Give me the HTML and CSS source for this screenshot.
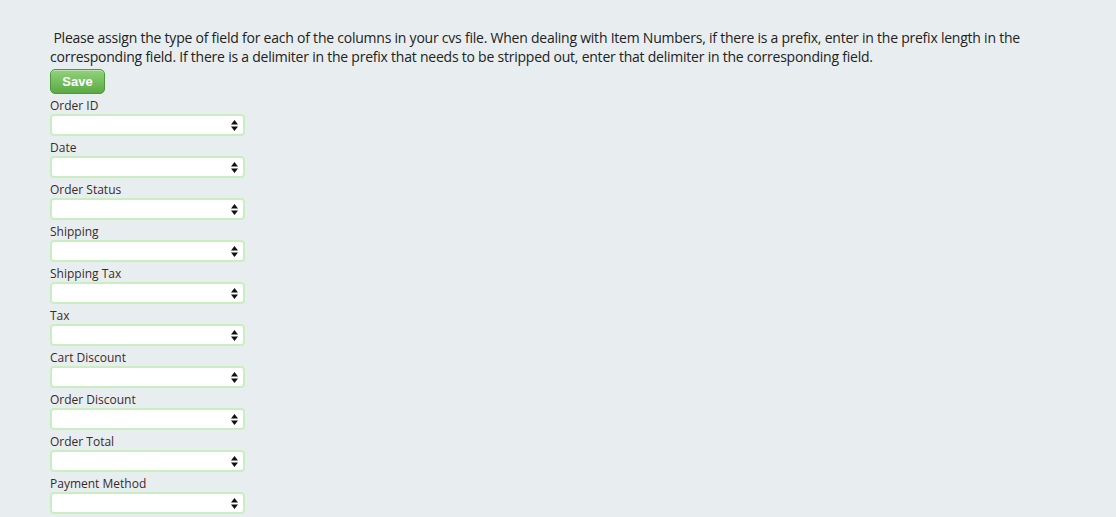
FILE: index.html
```html
<!DOCTYPE html>
<html>
<head>
<meta charset="utf-8">
<link rel="stylesheet" href="styles.css">
</head>
<body>
<div class="page">
  <p class="intro">&nbsp;Please assign the type of field for each of the columns in your cvs file. When dealing with Item Numbers, if there is a prefix, enter in the prefix length in the corresponding field. If there is a delimiter in the prefix that needs to be stripped out, enter that delimiter in the corresponding field.</p>
  <button class="save">Save</button>
  <div class="field"><label>Order ID</label><div class="select"><svg class="arrows" width="7" height="11" viewBox="0 0 7 11"><path d="M3.5 0L7 4.5H0Z M0 6.5H7L3.5 11Z" fill="#111"/></svg></div></div>
  <div class="field"><label>Date</label><div class="select"><svg class="arrows" width="7" height="11" viewBox="0 0 7 11"><path d="M3.5 0L7 4.5H0Z M0 6.5H7L3.5 11Z" fill="#111"/></svg></div></div>
  <div class="field"><label>Order Status</label><div class="select"><svg class="arrows" width="7" height="11" viewBox="0 0 7 11"><path d="M3.5 0L7 4.5H0Z M0 6.5H7L3.5 11Z" fill="#111"/></svg></div></div>
  <div class="field"><label>Shipping</label><div class="select"><svg class="arrows" width="7" height="11" viewBox="0 0 7 11"><path d="M3.5 0L7 4.5H0Z M0 6.5H7L3.5 11Z" fill="#111"/></svg></div></div>
  <div class="field"><label>Shipping Tax</label><div class="select"><svg class="arrows" width="7" height="11" viewBox="0 0 7 11"><path d="M3.5 0L7 4.5H0Z M0 6.5H7L3.5 11Z" fill="#111"/></svg></div></div>
  <div class="field"><label>Tax</label><div class="select"><svg class="arrows" width="7" height="11" viewBox="0 0 7 11"><path d="M3.5 0L7 4.5H0Z M0 6.5H7L3.5 11Z" fill="#111"/></svg></div></div>
  <div class="field"><label>Cart Discount</label><div class="select"><svg class="arrows" width="7" height="11" viewBox="0 0 7 11"><path d="M3.5 0L7 4.5H0Z M0 6.5H7L3.5 11Z" fill="#111"/></svg></div></div>
  <div class="field"><label>Order Discount</label><div class="select"><svg class="arrows" width="7" height="11" viewBox="0 0 7 11"><path d="M3.5 0L7 4.5H0Z M0 6.5H7L3.5 11Z" fill="#111"/></svg></div></div>
  <div class="field"><label>Order Total</label><div class="select"><svg class="arrows" width="7" height="11" viewBox="0 0 7 11"><path d="M3.5 0L7 4.5H0Z M0 6.5H7L3.5 11Z" fill="#111"/></svg></div></div>
  <div class="field"><label>Payment Method</label><div class="select"><svg class="arrows" width="7" height="11" viewBox="0 0 7 11"><path d="M3.5 0L7 4.5H0Z M0 6.5H7L3.5 11Z" fill="#111"/></svg></div></div>
</div>
</body>
</html>
```
FILE: styles.css
```css
html, body { margin: 0; padding: 0; }
body {
  background: #e8eef0;
  font-family: "Open Sans", "DejaVu Sans", sans-serif;
  color: #222;
  height: 517px;
  overflow: hidden;
}
.page {
  padding: 28px 0 0 50px;
  width: 1000px;
}
.intro {
  margin: 0;
  font-size: 14px;
  line-height: 19px;
  letter-spacing: -0.23px;
}
.save {
  display: block;
  margin-top: 3px;
  width: 55px;
  height: 25px;
  border: 1px solid #4a9a3a;
  border-radius: 5px;
  background: linear-gradient(#92d27c, #5aaa44);
  color: #fff;
  font-family: "Liberation Sans", Arial, sans-serif;
  font-weight: bold;
  font-size: 13px;
  padding: 0;
  box-shadow: inset 0 1px 0 rgba(255,255,255,0.4);
}
.field {
  display: flex;
  flex-direction: column;
  align-items: flex-start;
}
.field label {
  font-size: 12px;
  line-height: 16px;
  height: 16px;
  margin-top: 4px;
  color: #3a2a2a;
}
.select {
  box-sizing: border-box;
  width: 195px;
  height: 22px;
  background: #fff;
  border: 2px solid #c9efc0;
  border-radius: 4px;
  display: flex;
  align-items: center;
  justify-content: flex-end;
  padding-right: 5px;
}
.arrows {
  display: block;
}
```
